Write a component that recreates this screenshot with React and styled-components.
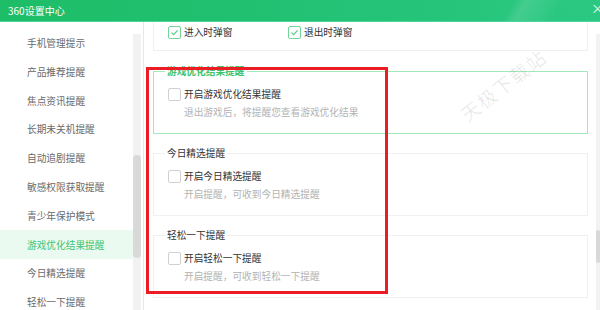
import React from "react";
import styled, { createGlobalStyle } from "styled-components";

const Global = createGlobalStyle`
  html, body { margin: 0; padding: 0; background: #fff; }
  body { font-family: "Noto Sans CJK SC", "Noto Sans", sans-serif; }
`;

const Window = styled.div`
  width: 600px;
  height: 310px;
  overflow: hidden;
  display: flex;
  flex-direction: column;
  background: #fff;
  font-size: 9.7px;
  line-height: 14px;
`;

const TitleBar = styled.div`
  height: 22px;
  flex-shrink: 0;
  display: flex;
  align-items: center;
  justify-content: space-between;
  padding-left: 8px;
  background:
    linear-gradient(120deg, rgba(255,255,255,0) 84%, rgba(255,255,255,0.12) 86%, rgba(255,255,255,0.05) 90%, rgba(255,255,255,0) 92%),
    linear-gradient(90deg, #1dbd68 0%, #22c173 50%, #2bc883 100%);
  color: #fff;
  font-size: 10px;
  border-bottom: 1px solid #4fd39a;
  box-sizing: border-box;
`;

const Close = styled.span`
  font-size: 13px;
  margin-right: -4px;
  color: #e8fff2;
  line-height: 1;
  margin-top: -6px;
`;

const Body = styled.div`
  flex: 1;
  display: flex;
  min-height: 0;
`;

const Sidebar = styled.div`
  width: 144px;
  flex-shrink: 0;
  display: flex;
  border-right: 1px solid #e6e6e6;
  box-sizing: border-box;
  padding-right: 2px;
`;

const NavList = styled.div`
  width: 133px;
  padding-top: 6.6px;
`;

const NavItem = styled.div`
  height: 28.8px;
  display: flex;
  align-items: center;
  padding-left: 27px;
  color: ${(p) => (p.$active ? "#41c372" : "#6a6a6a")};
  background: ${(p) => (p.$active ? "#eafaf0" : "transparent")};
  white-space: nowrap;
`;

const Track = styled.div`
  width: ${(p) => p.$w}px;
  margin-top: 12px;
  background: #f2f2f2;
  padding-top: ${(p) => p.$offset}px;
  box-sizing: border-box;
  flex-shrink: 0;
`;

const Thumb = styled.div`
  height: ${(p) => p.$h}px;
  background: #d9d9d9;
  border-radius: 4px;
`;

const Main = styled.div`
  flex: 1;
  display: flex;
  position: relative;
  min-width: 0;
`;

const Content = styled.div`
  flex: 1;
  padding: 0 8px 0 9px;
  display: flex;
  flex-direction: column;
`;

const TopCard = styled.div`
  height: 31px;
  box-sizing: border-box;
  border: 1px solid #efefef;
  border-top: none;
  padding: 3px 14px 0;
  display: flex;
  margin-bottom: 13px;
`;

const TopOption = styled.div`
  width: 120px;
`;

const Group = styled.fieldset`
  margin: 0 0 12px;
  padding: 9px 14px 14px;
  border-width: 1px;
  border-style: solid;
  border-color: ${(p) => (p.$active ? "#a3e8bb" : "#f0f0f0")};
  min-width: 0;
`;

const Legend = styled.legend`
  padding: 0 2px;
  margin-left: -3px;
  line-height: 14px;
  color: ${(p) => (p.$active ? "#3ec46d" : "#333")};
  font-weight: ${(p) => (p.$active ? 600 : 400)};
`;

const Row = styled.label`
  display: flex;
  align-items: center;
  gap: 3px;
  height: 14px;
  color: #333;
`;

const Box = styled.span`
  width: 13px;
  height: 13px;
  box-sizing: border-box;
  border: 1px solid ${(p) => (p.$checked ? "#74d59a" : "#d0d0d0")};
  border-radius: 2px;
  background: #fff;
  display: inline-flex;
  align-items: center;
  justify-content: center;
  flex-shrink: 0;
`;

const Desc = styled.div`
  margin-top: 4px;
  padding-left: 16px;
  color: #b3b3b3;
  height: 14px;
`;

const Watermark = styled.span`
  position: absolute;
  left: 308px;
  top: 53px;
  font-size: 19px;
  line-height: 20px;
  color: rgba(0, 0, 0, 0.09);
  transform: rotate(-38deg);
  white-space: nowrap;
  pointer-events: none;
  letter-spacing: 1.5px;
`;

const Highlight = styled.div`
  position: absolute;
  left: 2px;
  top: 45px;
  width: 242px;
  height: 227px;
  box-sizing: border-box;
  border: 3px solid #ec1c24;
  pointer-events: none;
`;

const Check = ({ checked }) => (
  <Box $checked={checked}>
    {checked && (
      <svg width="9" height="9" viewBox="0 0 9 9">
        <polyline points="1.5,4.6 3.6,6.6 7.6,2.4" fill="none" stroke="#52c97f" strokeWidth="1.1" />
      </svg>
    )}
  </Box>
);

const navItems = [
  "手机管理提示",
  "产品推荐提醒",
  "焦点资讯提醒",
  "长期未关机提醒",
  "自动追剧提醒",
  "敏感权限获取提醒",
  "青少年保护模式",
  "游戏优化结果提醒",
  "今日精选提醒",
  "轻松一下提醒",
];

const groups = [
  { title: "游戏优化结果提醒", label: "开启游戏优化结果提醒", desc: "退出游戏后，将提醒您查看游戏优化结果", active: true },
  { title: "今日精选提醒", label: "开启今日精选提醒", desc: "开启提醒，可收到今日精选提醒" },
  { title: "轻松一下提醒", label: "开启轻松一下提醒", desc: "开启提醒，可收到轻松一下提醒" },
];

export default function App() {
  return (
    <>
      <Global />
      <Window>
        <TitleBar>
          <span>360设置中心</span>
          <Close>×</Close>
        </TitleBar>
        <Body>
          <Sidebar>
            <NavList>
              {navItems.map((t) => (
                <NavItem key={t} $active={t === "游戏优化结果提醒"}>
                  {t}
                </NavItem>
              ))}
            </NavList>
            <Track $w={8} $offset={121}>
              <Thumb $h={103} />
            </Track>
          </Sidebar>
          <Main>
            <Content>
              <TopCard>
                <TopOption>
                  <Row>
                    <Check checked />
                    进入时弹窗
                  </Row>
                </TopOption>
                <TopOption>
                  <Row>
                    <Check checked />
                    退出时弹窗
                  </Row>
                </TopOption>
              </TopCard>
              {groups.map((g) => (
                <Group key={g.title} $active={g.active}>
                  <Legend $active={g.active}>{g.title}</Legend>
                  <Row>
                    <Check />
                    {g.label}
                  </Row>
                  <Desc>{g.desc}</Desc>
                </Group>
              ))}
            </Content>
            <Track $w={4} $offset={196}>
              <Thumb $h={33} />
            </Track>
            <Watermark>天极下载站</Watermark>
            <Highlight />
          </Main>
        </Body>
      </Window>
    </>
  );
}
